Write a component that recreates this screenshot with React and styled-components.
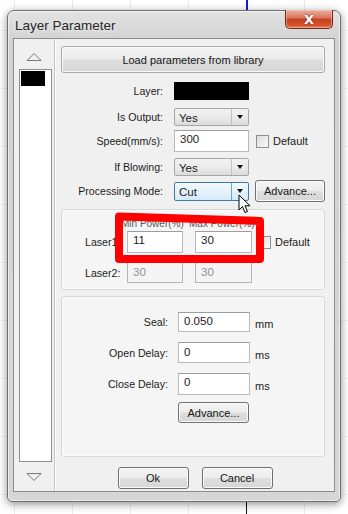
import React from 'react'
import styled, { createGlobalStyle } from 'styled-components'

const GlobalStyle = createGlobalStyle`
  html, body {
    margin: 0;
    padding: 0;
  }
  body {
    width: 348px;
    height: 514px;
    overflow: hidden;
    background: #fff;
    font-family: "Liberation Sans", Arial, sans-serif;
    font-size: 11px;
    color: #1b1b1b;
  }
`

const Page = styled.div`
  position: relative;
  width: 348px;
  height: 514px;
  box-sizing: border-box;
  padding: 10px 7px 0 7px;
  background-color: #fff;
  background-image: linear-gradient(to right, #ececec 1px, transparent 1px),
    linear-gradient(to bottom, #f2f2f2 1px, transparent 1px);
  background-size: 58px 100%, 100% 58px;
  background-position: 14px 0, 0 30px;
`

const CanvasLine = styled.div`
  position: absolute;
  left: 246px;
  top: ${p => p.top}px;
  width: ${p => p.w}px;
  height: ${p => p.h}px;
  background: ${p => p.color};
`

const Window = styled.div`
  position: relative;
  width: 334px;
  height: 492px;
  box-sizing: border-box;
  display: flex;
  flex-direction: column;
  border: 1px solid #6f6f6f;
  border-radius: 7px 7px 5px 5px;
  background: linear-gradient(#e2e2e2, #d2d2d2 30px, #d6d6d6);
  box-shadow: 0 2px 9px rgba(0, 0, 0, 0.45), inset 0 0 0 1px rgba(255, 255, 255, 0.55);
`

const TitleBar = styled.div`
  height: 27px;
  flex-shrink: 0;
  display: flex;
  justify-content: space-between;
  align-items: flex-start;
`

const Title = styled.div`
  padding: 7px 0 0 7px;
  font-size: 13.5px;
  color: #262626;
  text-shadow: 0 0 6px rgba(255, 255, 255, 0.9);
`

const CloseButton = styled.div`
  width: 48px;
  height: 19px;
  margin: -1px 7px 0 0;
  box-sizing: border-box;
  display: flex;
  align-items: center;
  justify-content: center;
  border: 1px solid #6a2a1c;
  border-top: none;
  border-radius: 0 0 5px 5px;
  background: linear-gradient(#eab1a2, #d9735a 45%, #c7401f 50%, #d5522e 85%, #e58a67);
  box-shadow: inset 0 0 0 1px rgba(255, 200, 180, 0.5);
  color: #fff;
  font-family: "DejaVu Sans", sans-serif;
  font-weight: bold;
  font-size: 13px;
  text-shadow: 0 0 2px #6a2a1c;
`

const Client = styled.div`
  flex: 1;
  margin: 0 5px 9px 5px;
  display: flex;
  border: 1px solid #8c8c8c;
  background: #f0f0f0;
`

const LeftCol = styled.div`
  width: 40px;
  flex-shrink: 0;
  display: flex;
  flex-direction: column;
  align-items: center;
  padding-top: 14px;
  border-right: 1px solid #c4c4c4;
  box-shadow: 1px 0 0 #fbfbfb;
`

const LayerList = styled.div`
  width: 33px;
  height: 393px;
  box-sizing: border-box;
  margin: 8px 0 11px 3px;
  padding: 1px;
  border: 1px solid #8e8e8e;
  background: #fff;
`

const ListSwatch = styled.div`
  width: 24px;
  height: 15px;
  background: #000;
`

const RightCol = styled.div`
  flex: 1;
  display: flex;
  flex-direction: column;
  padding: 7px 9px 0 6px;
`

const Button = styled.div`
  width: ${p => (p.w ? `${p.w}px` : 'auto')};
  height: ${p => p.h || 22}px;
  box-sizing: border-box;
  display: flex;
  align-items: center;
  justify-content: center;
  margin-left: ${p => p.ml || 0}px;
  border: 1px solid ${p => (p.soft ? '#a9a9a9' : '#707070')};
  border-radius: 3px;
  background: linear-gradient(#f4f4f4, #ececec 48%, #dedede 52%, #d6d6d6);
  box-shadow: inset 0 0 0 1px #fafafa;
  font-size: 11px;
  color: #151515;
`

const Row = styled.div`
  display: flex;
  align-items: center;
  height: ${p => p.h}px;
  margin-top: ${p => p.mt}px;
`

const Label = styled.div`
  width: ${p => p.w}px;
  margin-right: ${p => p.gap}px;
  text-align: ${p => p.align || 'right'};
  white-space: nowrap;
  font-size: 10.6px;
  color: #1b1b1b;
  flex-shrink: 0;
`

const LayerSwatch = styled.div`
  width: 75px;
  height: 18px;
  background: #000;
`

const Combo = styled.div`
  width: 75px;
  height: ${p => p.h || 18}px;
  box-sizing: border-box;
  display: flex;
  border: 1px solid ${p => (p.focused ? '#3d7bad' : '#a7a7a7')};
  border-radius: 2px;
  background: ${p =>
    p.focused
      ? 'linear-gradient(#f3f9fd, #e4f1fb 50%, #d4eaf8)'
      : 'linear-gradient(#f2f2f2, #ebebeb 50%, #dcdcdc)'};
`

const ComboText = styled.div`
  flex: 1;
  padding: 1px 0 0 4px;
  display: flex;
  align-items: center;
  font-size: 11.5px;
`

const ComboArrow = styled.div`
  width: 16px;
  display: flex;
  align-items: center;
  justify-content: center;
  border-left: 1px solid ${p => (p.focused ? '#6fa6d0' : '#c2c2c2')};

  &::after {
    content: '';
    border-left: 3.5px solid transparent;
    border-right: 3.5px solid transparent;
    border-top: 4px solid #111;
  }
`

const TextBox = styled.div`
  width: ${p => p.w}px;
  height: ${p => p.h}px;
  margin-left: ${p => p.ml || 0}px;
  box-sizing: border-box;
  flex-shrink: 0;
  display: flex;
  align-items: center;
  padding: 0 0 ${p => (p.h > 21 ? 4 : 2)}px 5px;
  border: 1px solid ${p => (p.disabled ? '#b3b6b8' : '#b6b9bd')};
  border-top-color: ${p => (p.disabled ? '#aeb1b4' : '#9a9da2')};
  background: ${p => (p.disabled ? '#f4f4f4' : '#fff')};
  color: ${p => (p.disabled ? '#929292' : '#1b1b1b')};
  font-size: 11.5px;
`

const Check = styled.div`
  width: 13px;
  height: 13px;
  box-sizing: border-box;
  margin: 1px 4px 0 ${p => p.ml}px;
  border: 1px solid #8f8f8f;
  background: linear-gradient(135deg, #dcdcdc, #fbfbfb);
  flex-shrink: 0;
`

const Unit = styled.div`
  margin-left: 5px;
  padding-top: ${p => p.pt || 0}px;
  font-size: 11px;
`

const Group = styled.div`
  position: relative;
  height: ${p => p.h}px;
  margin-top: ${p => p.mt}px;
  box-sizing: border-box;
  padding-left: ${p => p.pl || 0}px;
  border: 1px solid #d6d9dc;
  border-radius: 3px;
  background: #f5f5f5;
  box-shadow: inset 0 0 0 1px #fbfbfb;
`

const PowerHeader = styled.div`
  display: flex;
  height: 10px;
  margin: 8px 0 0 36px;
`

const HeaderCell = styled.div`
  width: 62px;
  margin-right: 6px;
  text-align: center;
  white-space: nowrap;
  font-size: 10px;
  color: #555;
`

const Mark = styled.svg`
  position: absolute;
  left: 0;
  top: 0;
  overflow: visible;
  pointer-events: none;
`

const Cursor = styled.svg`
  position: absolute;
  left: 230px;
  top: 183px;
`

const Footer = styled.div`
  display: flex;
  justify-content: center;
  gap: 13px;
  margin-top: 10px;
  padding-left: 4px;
`

function Arrow({ down }) {
  return (
    <svg width="16" height="8" viewBox="0 0 16 8">
      <polygon
        points={down ? '1,0.5 15,0.5 8,7.5' : '1,7.5 15,7.5 8,0.5'}
        fill="#eeeeee"
        stroke="#7a7a7a"
        strokeWidth="1"
      />
    </svg>
  )
}

function Select({ value, focused, h }) {
  return (
    <Combo focused={focused} h={h}>
      <ComboText>{value}</ComboText>
      <ComboArrow focused={focused} />
    </Combo>
  )
}

export default function App() {
  return (
    <>
      <GlobalStyle />
      <Page>
        <CanvasLine top={0} h={10} w={2} color="#1a1ad6" />
        <CanvasLine top={502} h={12} w={1} color="#111" />
        <Window>
          <TitleBar>
            <Title>Layer Parameter</Title>
            <CloseButton>X</CloseButton>
          </TitleBar>
          <Client>
            <LeftCol>
              <Arrow />
              <LayerList>
                <ListSwatch />
              </LayerList>
              <Arrow down />
            </LeftCol>
            <RightCol>
              <Button h={27} soft>
                Load parameters from library
              </Button>

              <Row h={18} mt={9}>
                <Label w={102} gap={11}>Layer:</Label>
                <LayerSwatch />
              </Row>
              <Row h={18} mt={8}>
                <Label w={102} gap={11}>Is Output:</Label>
                <Select value="Yes" />
              </Row>
              <Row h={22} mt={4}>
                <Label w={102} gap={11}>Speed(mm/s):</Label>
                <TextBox w={75} h={22}>300</TextBox>
                <Check ml={7} />
                <span>Default</span>
              </Row>
              <Row h={18} mt={6}>
                <Label w={102} gap={11}>If Blowing:</Label>
                <Select value="Yes" />
              </Row>
              <Row h={22} mt={4}>
                <Label w={102} gap={11}>Processing Mode:</Label>
                <Select value="Cut" focused h={19} />
                <Button w={70} ml={6}>Advance...</Button>
              </Row>

              <Group h={81} mt={7} pl={23}>
                <PowerHeader>
                  <HeaderCell>Min Power(%)</HeaderCell>
                  <HeaderCell>Max Power(%)</HeaderCell>
                </PowerHeader>
                <Row h={22} mt={3}>
                  <Label w={42} gap={0} align="left">Laser1</Label>
                  <TextBox w={56} h={22}>11</TextBox>
                  <TextBox w={57} h={22} ml={12}>30</TextBox>
                  <Check ml={6} />
                  <span>Default</span>
                </Row>
                <Row h={21} mt={9}>
                  <Label w={42} gap={0} align="left">Laser2:</Label>
                  <TextBox w={56} h={21} disabled>30</TextBox>
                  <TextBox w={57} h={21} ml={12} disabled>30</TextBox>
                </Row>
                <Mark width="264" height="79">
                  <path
                    d="M57 6.5 L198 11 L198 49 L57 49 Z"
                    fill="none"
                    stroke="#ff0000"
                    strokeWidth="8"
                    strokeLinejoin="round"
                  />
                </Mark>
              </Group>

              <Group h={161} mt={6}>
                <Row h={20} mt={15}>
                  <Label w={106} gap={10}>Seal:</Label>
                  <TextBox w={72} h={20}>0.050</TextBox>
                  <Unit pt={4}>mm</Unit>
                </Row>
                <Row h={21} mt={10}>
                  <Label w={106} gap={10}>Open Delay:</Label>
                  <TextBox w={72} h={21}>0</TextBox>
                  <Unit pt={4}>ms</Unit>
                </Row>
                <Row h={22} mt={10}>
                  <Label w={106} gap={10}>Close Delay:</Label>
                  <TextBox w={72} h={22}>0</TextBox>
                  <Unit pt={4}>ms</Unit>
                </Row>
                <Row h={21} mt={7}>
                  <Button w={71} h={21} ml={116}>Advance...</Button>
                </Row>
              </Group>

              <Footer>
                <Button w={71}>Ok</Button>
                <Button w={71}>Cancel</Button>
              </Footer>
            </RightCol>
          </Client>
          <Cursor width="13" height="20" viewBox="0 0 13 20">
            <path
              d="M1 1 L1 16 L4.5 12.5 L7 18.5 L9.5 17.5 L7 11.8 L12 11.8 Z"
              fill="#fff"
              stroke="#000"
              strokeWidth="1"
              strokeLinejoin="round"
            />
          </Cursor>
        </Window>
      </Page>
    </>
  )
}
